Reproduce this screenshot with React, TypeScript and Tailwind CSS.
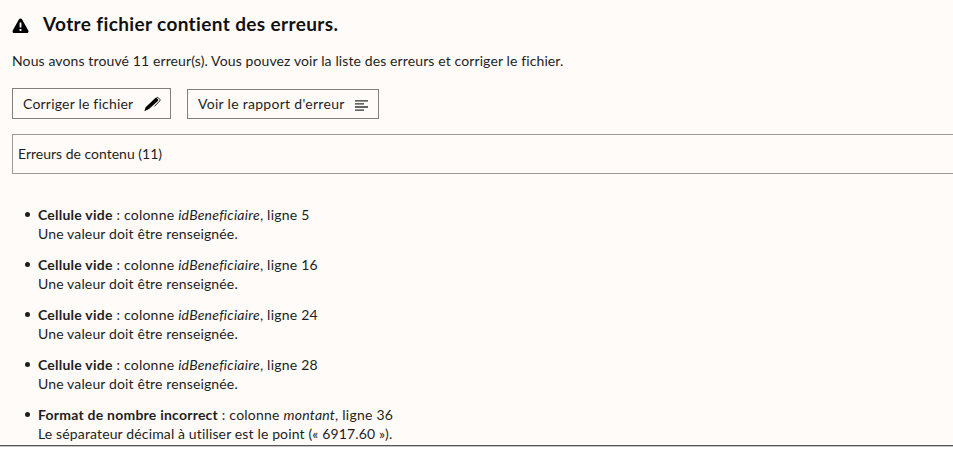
import React from "react";

const EMPTY = "Une valeur doit être renseignée.";

const errors = [
  { kind: "Cellule vide", col: "idBeneficiaire", line: 5, text: EMPTY },
  { kind: "Cellule vide", col: "idBeneficiaire", line: 16, text: EMPTY },
  { kind: "Cellule vide", col: "idBeneficiaire", line: 24, text: EMPTY },
  { kind: "Cellule vide", col: "idBeneficiaire", line: 28, text: EMPTY },
  { kind: "Format de nombre incorrect", col: "montant", line: 36, text: "Le séparateur décimal à utiliser est le point (« 6917.60 »)." },
];

function WarningIcon() {
  return (
    <svg className="mt-[3px] h-[16px] w-[17px]" viewBox="0 0 17 16">
      <path d="M8.5 2.2 14.8 13.4H2.2Z" fill="#000" stroke="#000" strokeWidth="3.4" strokeLinejoin="round" />
      <path d="M7.6 4.6h1.8v5H7.6zM7.6 11h1.8v1.9H7.6z" fill="#fff" />
    </svg>
  );
}

function PenIcon() {
  return (
    <svg className="mt-px h-4 w-[17px] shrink-0" viewBox="0 0 17 16">
      <path d="M.4 15.2 1.6 11.2 10.8 2.4Q11.8 1.4 12.6 2L14 3.2 14.3 4.4 5 13 .4 15.2Z" fill="#000" />
      <path d="M12.6 1.5 13.8 1.3 15.9 3.5Q16.3 4.4 15.6 5.1L10.4 10.4" fill="none" stroke="#000" strokeWidth="0.9" />
    </svg>
  );
}

function LinesIcon() {
  return (
    <svg className="mt-[3px] h-[11px] w-[13px] shrink-0" viewBox="0 0 13 11" stroke="#333" strokeWidth="1.3">
      <path d="M0 .8h13M0 3.9h9M0 7h13M0 10.1h9" />
    </svg>
  );
}

export default function App() {
  return (
    <div className="h-[451px] overflow-hidden bg-white text-[14px] text-[#1e1e1e] font-['Lato',sans-serif]">
      <main className="h-[446px] overflow-hidden border-b border-[#555] bg-[#fffbf8] pl-3">
        <header className="flex h-[49px] items-center">
          <WarningIcon />
          <h1 className="ml-[14px] text-[19px] font-bold tracking-[0.37px] text-[#111]"><span>Votre fichier contient des erreurs.</span></h1>
        </header>
        <p className="mt-[2px] h-5 leading-5 tracking-[0.115px]"><span>Nous avons trouvé 11 erreur(s). Vous pouvez voir la liste des erreurs et corriger le fichier.</span></p>
        <div className="mt-[17px] flex items-end gap-4">
          <button className="flex h-[31px] w-[159px] items-center justify-between border border-[#808080] pr-[9px] pl-[10px] tracking-[0.2px]">
            <span>Corriger le fichier</span><PenIcon />
          </button>
          <button className="flex h-[30px] w-[192px] items-center justify-between border border-[#808080] pr-[10px] pb-px pl-[10px] tracking-[0.29px]">
            <span>Voir le rapport d'erreur</span><LinesIcon />
          </button>
        </div>
        <section className="mt-[15px] flex h-10 items-center border-y border-l border-[#999] pb-px pl-[5px]"><span>Erreurs de contenu (11)</span></section>
        <ul className="mt-[31px]">
          {errors.map((e) => (
            <li key={e.line} className="mb-3 flex leading-[19px]">
              <span className="mt-[7px] mr-[8px] ml-[13px] h-[5px] w-[5px] shrink-0 rounded-full bg-[#1e1e1e]" />
              <div>
                <p className="tracking-[0.23px]"><b>{e.kind}</b> : colonne <i>{e.col}</i>, ligne {e.line}</p>
                <p className="tracking-[0.14px]">{e.text}</p>
              </div>
            </li>
          ))}
        </ul>
      </main>
      <div className="h-px bg-[#c4c4c4]" />
    </div>
  );
}
